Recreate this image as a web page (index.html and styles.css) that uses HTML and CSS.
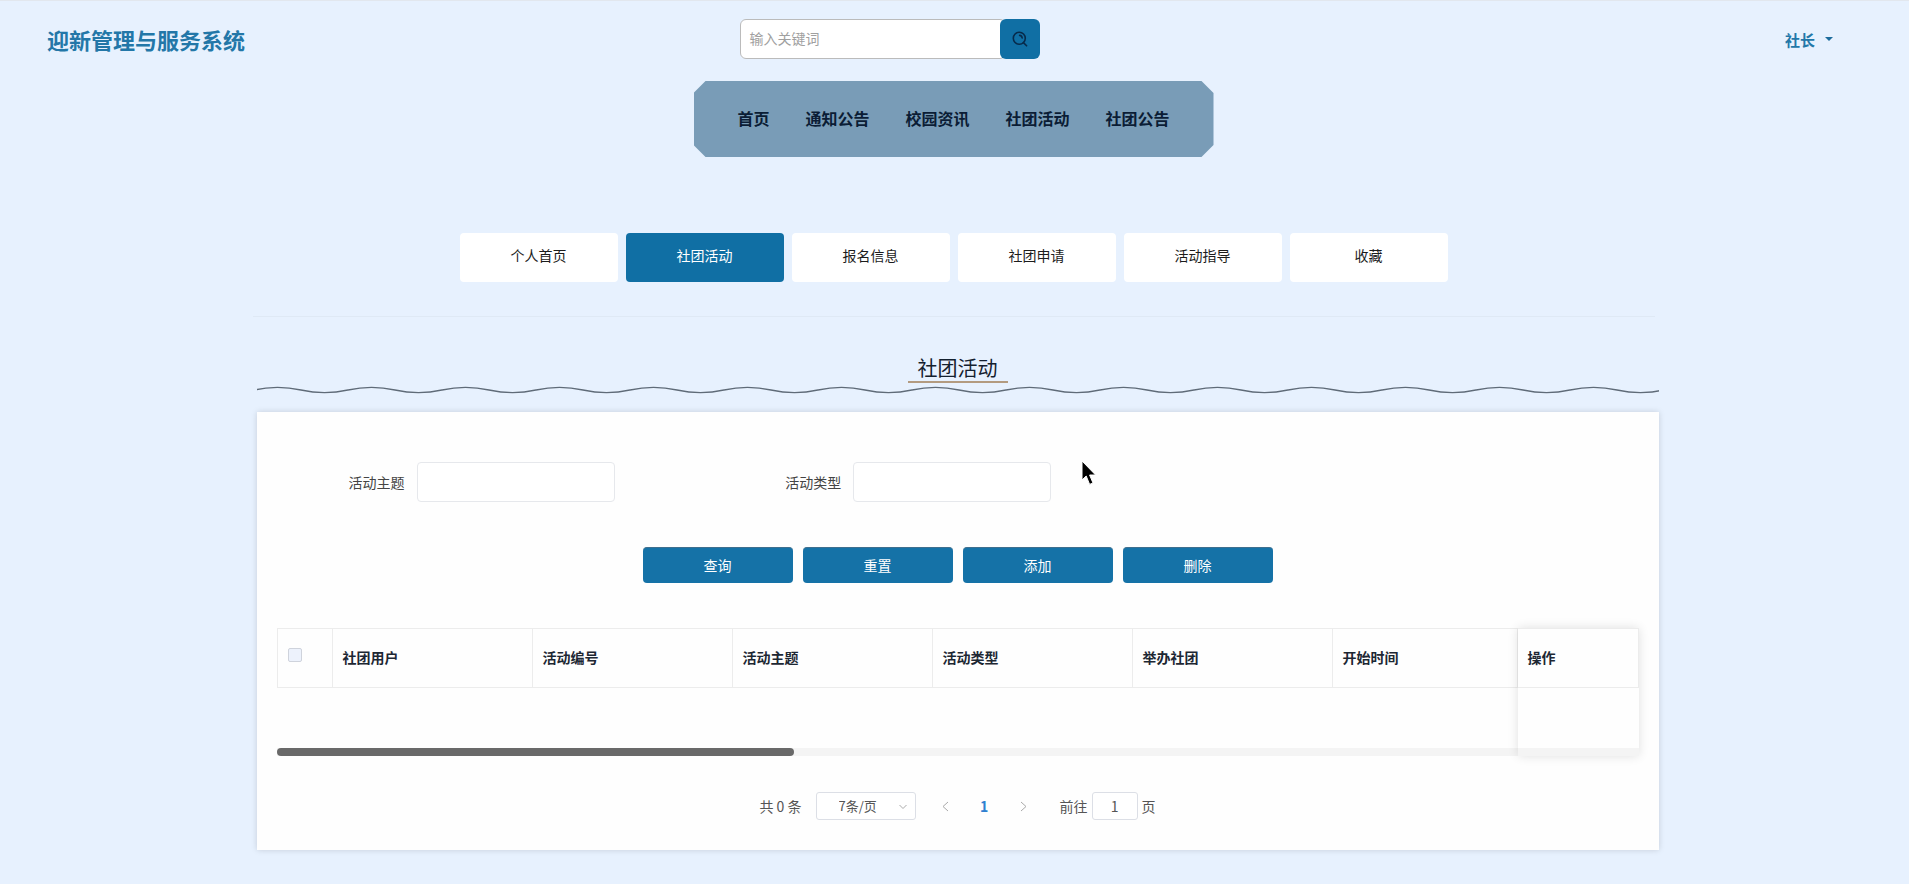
FILE: index.html
```
<!DOCTYPE html>
<html lang="zh-CN">
<head>
    <meta charset="UTF-8">
    <meta name="viewport" content="width=device-width, initial-scale=1.0">
    <title>迎新管理与服务系统</title>
    <link rel="stylesheet" href="styles.css">
</head>
<body>
<header class="top-bar">
    <h1 class="site-title">迎新管理与服务系统</h1>
    <form class="search">
        <input type="text" class="search-input" placeholder="输入关键词" aria-label="输入关键词">
        <button type="submit" class="search-btn" aria-label="搜索">
            <svg width="16" height="16" viewBox="0 0 16 16" fill="none" stroke="currentColor" stroke-width="1.6" stroke-linecap="round">
                <circle cx="7.3" cy="7.3" r="6"/>
                <path d="M11.4 11.6L14.6 14.8"/>
                <path d="M7.6 4.4a3 3 0 0 1 2.6 2.6"/>
            </svg>
        </button>
    </form>
    <button type="button" class="user-menu">社长<span class="caret"></span></button>
</header>

<nav class="main-nav">
    <a href="#">首页</a>
    <a href="#">通知公告</a>
    <a href="#">校园资讯</a>
    <a href="#">社团活动</a>
    <a href="#">社团公告</a>
</nav>

<nav class="tabs">
    <a href="#" class="tab">个人首页</a>
    <a href="#" class="tab active">社团活动</a>
    <a href="#" class="tab">报名信息</a>
    <a href="#" class="tab">社团申请</a>
    <a href="#" class="tab">活动指导</a>
    <a href="#" class="tab">收藏</a>
</nav>

<main class="content">
    <div class="section-head">
        <h2 class="section-title">社团活动</h2>
        <svg class="wave" height="8">
            <defs>
                <pattern id="wave" x="-3" width="94" height="8" patternUnits="userSpaceOnUse">
                    <path d="M-2 4.4L0 4C16 0.4 31 0.4 47 4S78 7.6 94 4L96 3.6" fill="none" stroke="#5f6b78" stroke-width="1.4"/>
                </pattern>
            </defs>
            <rect width="100%" height="8" fill="url(#wave)"/>
        </svg>
    </div>

    <section class="panel">
        <form class="filters">
            <div class="form-group">
                <label for="topic">活动主题</label>
                <input type="text" id="topic" name="topic">
            </div>
            <div class="form-group">
                <label for="type">活动类型</label>
                <input type="text" id="type" name="type">
            </div>
        </form>

        <div class="actions">
            <button type="button">查询</button>
            <button type="button">重置</button>
            <button type="button">添加</button>
            <button type="button">删除</button>
        </div>

        <div class="table-wrap">
            <table class="data-table">
                <thead>
                    <tr>
                        <th class="col-check"><input type="checkbox" aria-label="全选"></th>
                        <th class="col">社团用户</th>
                        <th class="col">活动编号</th>
                        <th class="col">活动主题</th>
                        <th class="col">活动类型</th>
                        <th class="col">举办社团</th>
                        <th>开始时间</th>
                        <th class="col-action">操作</th>
                    </tr>
                </thead>
            </table>
            <div class="scroll-track"><div class="scroll-thumb"></div></div>
            <div class="fixed-shadow"></div>
        </div>

        <div class="pagination">
            <span>共 0 条</span>
            <div class="page-size">
                <select aria-label="每页条数">
                    <option>7条/页</option>
                </select>
                <svg class="select-arrow" width="8" height="6" viewBox="0 0 8 6"><path d="M0.5 1L4 4.5L7.5 1"/></svg>
            </div>
            <div class="pager">
                <button type="button" aria-label="上一页"><svg width="7" height="11" viewBox="0 0 7 11"><path d="M6 1L1 5.5L6 10"/></svg></button>
                <button type="button" class="current">1</button>
                <button type="button" aria-label="下一页"><svg width="7" height="11" viewBox="0 0 7 11"><path d="M1 1L6 5.5L1 10"/></svg></button>
            </div>
            <div class="jump">
                <label for="page">前往</label>
                <input type="text" id="page" value="1">
                <span>页</span>
            </div>
        </div>
    </section>
</main>

<svg class="cursor" width="16" height="26" viewBox="0 0 16 26">
    <path d="M1 1V20L5.2 16L8.6 24.4L12 23L8.6 15H14.6Z" fill="#000" stroke="#fff" stroke-width="1"/>
</svg>
</body>
</html>
```
FILE: styles.css
```
* {
    box-sizing: border-box;
}

body {
    margin: 0;
    min-height: 100vh;
    padding-right: 2px;
    background-color: #e7f1fe;
    border-top: 1px solid #e2e7ee;
    font-family: "Noto Sans CJK SC", sans-serif;
    font-size: 14px;
    color: #1c1c1c;
}

button, input, select {
    font-family: inherit;
    font-size: inherit;
}

a {
    text-decoration: none;
    color: inherit;
}

/* Header */
.top-bar {
    display: grid;
    grid-template-columns: 7fr 300px 8fr;
    align-items: center;
    height: 80px;
    padding: 0 74px 4px 47px;
}

.site-title {
    margin: 0;
    font-size: 22px;
    line-height: 32px;
    color: #2377a8;
}

.search {
    display: flex;
    height: 40px;
}

.search-input {
    flex: 1;
    min-width: 0;
    margin-right: -6px;
    padding: 0 8px 2px;
    border: 1px solid #bbb;
    border-radius: 6px;
    background: #fff;
    outline: none;
}

.search-input::placeholder {
    color: #a0a0a0;
}

.search-btn {
    display: flex;
    align-items: center;
    justify-content: center;
    position: relative;
    width: 40px;
    padding: 0;
    border: none;
    border-radius: 6px;
    background: #106fa4;
    color: #072a4a;
    cursor: pointer;
}

.user-menu {
    display: flex;
    align-items: center;
    gap: 10px;
    justify-self: end;
    padding: 0;
    border: none;
    background: none;
    font-size: 15px;
    font-weight: 700;
    color: #2377a8;
    cursor: pointer;
}

.caret {
    border: 4px solid transparent;
    border-top-color: #1d6c9c;
    border-bottom: none;
}

.main-nav {
    display: flex;
    align-items: center;
    justify-content: center;
    gap: 36px;
    width: 520px;
    height: 76px;
    margin: 0 auto;
    padding-bottom: 2px;
    background: #799cb7;
    clip-path: polygon(12px 0, calc(100% - 12px) 0, 100% 12px, 100% calc(100% - 12px), calc(100% - 12px) 100%, 12px 100%, 0 calc(100% - 12px), 0 12px);
    font-size: 16px;
    font-weight: 700;
    color: #0b1d35;
}

/* Tabs */
.tabs {
    display: flex;
    justify-content: center;
    gap: 8px;
    max-width: 1402px;
    margin: 76px auto 0;
    padding-bottom: 34px;
    border-bottom: 1px solid #dfe9f5;
}

.tab {
    width: 158px;
    padding-bottom: 4px;
    line-height: 45px;
    text-align: center;
    background: #fff;
    border-radius: 4px;
}

.tab.active {
    background: #106fa4;
    color: #fff;
}

.content {
    max-width: 1410px;
    margin: 0 auto;
    padding: 38px 0 32px 8px;
}

.section-head {
    display: flex;
    flex-direction: column;
    align-items: center;
}

.section-title {
    width: 100px;
    margin: 0;
    border-bottom: 2px solid #b39b80;
    font-size: 20px;
    font-weight: 400;
    line-height: 26px;
    text-align: center;
    color: #14202e;
}

.wave {
    width: 100%;
    margin-top: 3px;
}

.panel {
    margin-top: 18px;
    padding: 50px 20px 30px;
    background: #fefefe;
    box-shadow: 0 0 6px rgba(0, 0, 0, 0.15);
}

/* Search form */
.filters {
    display: grid;
    grid-template-columns: repeat(3, 1fr);
    padding: 0 0 0 52px;
}

.form-group {
    display: flex;
    align-items: center;
    gap: 12px;
    padding-left: 20px;
    color: #444;
}

.form-group input {
    width: 198px;
    height: 40px;
    padding: 0 12px;
    border: 1px solid #e6e8ec;
    border-radius: 4px;
    background: #fff;
}

.actions {
    display: flex;
    justify-content: center;
    gap: 10px;
    margin-top: 45px;
}

.actions button {
    width: 150px;
    height: 36px;
    padding: 0 0 2px;
    border: none;
    border-top: 1px solid #3f6f8e;
    border-radius: 4px;
    background: #1572a7;
    color: #fff;
    cursor: pointer;
}

/* Table */
.table-wrap {
    position: relative;
    margin-top: 45px;
}

.data-table {
    width: 100%;
    table-layout: fixed;
    border-collapse: collapse;
}

.data-table th {
    height: 59px;
    padding: 0 10px 2px;
    border: 1px solid #ececec;
    text-align: left;
    font-weight: 700;
    color: #1d2733;
}

.data-table .col-check {
    width: 55px;
}

.data-table .col {
    width: 200px;
}

.data-table .col-action {
    width: 121px;
}

.col-check input {
    appearance: none;
    display: block;
    width: 14px;
    height: 14px;
    margin: 0 0 4px;
    border: 1px solid #cfd3dc;
    border-radius: 2px;
    background: #edf2fc;
}

.scroll-track {
    margin-top: 60px;
    height: 8px;
    background: #f4f4f4;
}

.scroll-thumb {
    width: 38%;
    height: 8px;
    border-radius: 4px;
    background: #696969;
}

/* shadow of the fixed right column */
.fixed-shadow {
    position: absolute;
    top: 0;
    right: 0;
    bottom: 0;
    width: 121px;
    box-shadow: 0 0 10px rgba(0, 0, 0, 0.12);
    pointer-events: none;
}

/* Pagination */
.pagination {
    display: flex;
    align-items: center;
    justify-content: center;
    margin-top: 36px;
    color: #555;
}

.page-size {
    display: flex;
    position: relative;
    margin-left: 14px;
}

.page-size select {
    appearance: none;
    width: 100px;
    height: 28px;
    padding: 0 22px 2px;
    border: 1px solid #dcdfe6;
    border-radius: 3px;
    background: #fff;
    font-size: 13px;
    color: #555;
}

.select-arrow {
    position: absolute;
    top: 12px;
    right: 9px;
}

.pagination path {
    fill: none;
    stroke: #aaa;
}

.pager {
    display: flex;
    margin: 0 17px 0 10px;
}

.pager button {
    display: flex;
    align-items: center;
    justify-content: center;
    width: 39px;
    height: 28px;
    padding: 0;
    border: none;
    background: none;
}

.pager .current {
    font-weight: 700;
    color: #3080d0;
}

.jump {
    display: flex;
    align-items: center;
    gap: 4px;
}

.jump input {
    width: 46px;
    height: 28px;
    padding: 0;
    border: 1px solid #dcdfe6;
    border-radius: 3px;
    background: #fff;
    text-align: center;
    color: #555;
}

/* mouse pointer over the page */
.cursor {
    position: absolute;
    left: 1081px;
    top: 460px;
}
```
